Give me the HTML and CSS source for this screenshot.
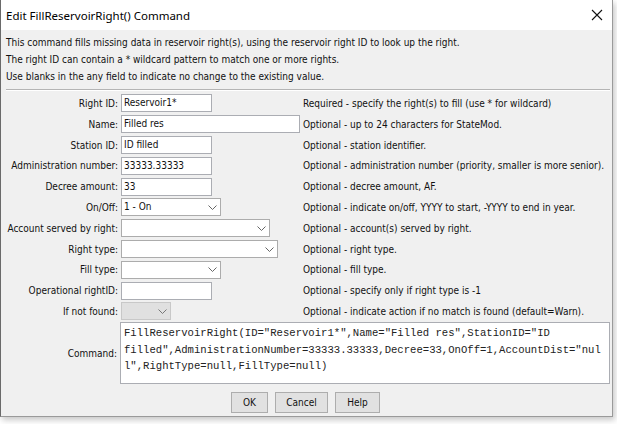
FILE: index.html
```html
<!DOCTYPE html>
<html>
<head>
<meta charset="utf-8">
<link rel="stylesheet" href="styles.css">
</head>
<body>
<div class="window">
  <div class="titlebar">
    <span class="title">Edit FillReservoirRight() Command</span>
    <span class="close"><svg width="12" height="12" viewBox="0 0 12 12"><path d="M1 1L11 11M11 1L1 11" stroke="#111" stroke-width="1.1" fill="none"/></svg></span>
  </div>
  <div class="content">
    <div class="intro">
      <p>This command fills missing data in reservoir right(s), using the reservoir right ID to look up the right.</p>
      <p>The right ID can contain a * wildcard pattern to match one or more rights.</p>
      <p>Use blanks in the any field to indicate no change to the existing value.</p>
    </div>
    <div class="sep"></div>
    <div class="form">
      <div class="label">Right ID:</div>
      <div class="cell"><div class="input w91">Reservoir1*</div></div>
      <div class="desc">Required - specify the right(s) to fill (use * for wildcard)</div>

      <div class="label">Name:</div>
      <div class="cell"><div class="input w179">Filled res</div></div>
      <div class="desc">Optional - up to 24 characters for StateMod.</div>

      <div class="label">Station ID:</div>
      <div class="cell"><div class="input w91">ID filled</div></div>
      <div class="desc">Optional - station identifier.</div>

      <div class="label">Administration number:</div>
      <div class="cell"><div class="input w91">33333.33333</div></div>
      <div class="desc">Optional - administration number (priority, smaller is more senior).</div>

      <div class="label">Decree amount:</div>
      <div class="cell"><div class="input w91">33</div></div>
      <div class="desc">Optional - decree amount, AF.</div>

      <div class="label">On/Off:</div>
      <div class="cell"><div class="combo w100"><span class="combo-text">1 - On</span><svg class="chev" width="9" height="5" viewBox="0 0 9 5"><path d="M0.5 0.5L4.5 4.5L8.5 0.5" stroke="#666" fill="none"/></svg></div></div>
      <div class="desc">Optional - indicate on/off, YYYY to start, -YYYY to end in year.</div>

      <div class="label">Account served by right:</div>
      <div class="cell"><div class="combo w149"><span class="combo-text"></span><svg class="chev" width="9" height="5" viewBox="0 0 9 5"><path d="M0.5 0.5L4.5 4.5L8.5 0.5" stroke="#666" fill="none"/></svg></div></div>
      <div class="desc">Optional - account(s) served by right.</div>

      <div class="label">Right type:</div>
      <div class="cell"><div class="combo w157"><span class="combo-text"></span><svg class="chev" width="9" height="5" viewBox="0 0 9 5"><path d="M0.5 0.5L4.5 4.5L8.5 0.5" stroke="#666" fill="none"/></svg></div></div>
      <div class="desc">Optional - right type.</div>

      <div class="label">Fill type:</div>
      <div class="cell"><div class="combo w100"><span class="combo-text"></span><svg class="chev" width="9" height="5" viewBox="0 0 9 5"><path d="M0.5 0.5L4.5 4.5L8.5 0.5" stroke="#666" fill="none"/></svg></div></div>
      <div class="desc">Optional - fill type.</div>

      <div class="label">Operational rightID:</div>
      <div class="cell"><div class="input w91"></div></div>
      <div class="desc">Optional - specify only if right type is -1</div>

      <div class="label">If not found:</div>
      <div class="cell"><div class="combo disabled w50"><span class="combo-text"></span><svg class="chev" width="9" height="5" viewBox="0 0 9 5"><path d="M0.5 0.5L4.5 4.5L8.5 0.5" stroke="#777" fill="none"/></svg></div></div>
      <div class="desc">Optional - indicate action if no match is found (default=Warn).</div>
    </div>
    <div class="cmd-row">
      <div class="label cmd-label">Command:</div>
      <div class="textarea"><div class="code">FillReservoirRight(ID="Reservoir1*",Name="Filled res",StationID="ID</div><div class="code">filled",AdministrationNumber=33333.33333,Decree=33,OnOff=1,AccountDist="nul</div><div class="code">l",RightType=null,FillType=null)</div></div>
    </div>
    <div class="buttons">
      <div class="btn w37">OK</div>
      <div class="btn w53">Cancel</div>
      <div class="btn w45">Help</div>
    </div>
  </div>
</div>
</body>
</html>
```
FILE: styles.css
```css
html, body {
  margin: 0;
  padding: 0;
  background: #ffffff;
}
body {
  width: 617px;
  height: 424px;
  overflow: hidden;
  font-family: "DejaVu Sans Condensed", "DejaVu Sans", sans-serif;
  font-size: 10px;
  color: #111;
}
.window {
  width: 611px;
  height: 416px;
  border-left: 1px solid #6a6a6a;
  border-right: 1px solid #9a9a9a;
  border-bottom: 1px solid #9a9a9a;
  background: #f0f0f0;
  box-shadow: 2px 3px 6px rgba(0,0,0,0.22);
  display: flex;
  flex-direction: column;
}
.titlebar {
  height: 30px;
  background: #ffffff;
  display: flex;
  align-items: center;
  justify-content: space-between;
  padding-left: 5px;
  padding-right: 9px;
}
.title {
  font-family: "Noto Sans", sans-serif;
  font-size: 11.5px;
  color: #000;
  padding-top: 1px;
}
.close {
  display: flex;
  width: 12px;
  height: 12px;
}
.content {
  display: flex;
  flex-direction: column;
  padding-right: 2px;
}
.intro {
  padding: 3.5px 0 0 5px;
}
.intro p {
  margin: 0;
  height: 17px;
  line-height: 17px;
  white-space: nowrap;
}
.sep {
  margin: 4px 0 0 5px;
  height: 0;
  border-top: 1px solid #b4b4b4;
  border-bottom: 1px solid #ffffff;
}
.form {
  margin-top: 2.6px;
  display: grid;
  grid-template-columns: 120px 182px 1fr;
  grid-auto-rows: 20.8px;
  align-items: center;
}
.label {
  text-align: right;
  padding-right: 3px;
  white-space: nowrap;
}
.cell {
  display: flex;
  align-items: center;
}
.desc {
  white-space: nowrap;
}
.input, .combo {
  height: 18px;
  box-sizing: border-box;
  border: 1px solid #abadb3;
  background: #ffffff;
  padding-left: 2px;
  line-height: 16px;
  white-space: nowrap;
  overflow: hidden;
}
.combo {
  display: flex;
  align-items: center;
  justify-content: space-between;
  border-color: #acacac;
  padding-right: 3px;
}
.combo.disabled {
  background: #e0e0e0;
  border-color: #c8c8c8;
}
.chev {
  flex: none;
}
.w91 { width: 91px; }
.w179 { width: 179px; }
.w100 { width: 100px; }
.w149 { width: 149px; }
.w157 { width: 157px; }
.w50 { width: 50px; }
.cmd-row {
  margin-top: 0.6px;
  display: grid;
  grid-template-columns: 119px 1fr;
  align-items: center;
}
.textarea {
  height: 62px;
  box-sizing: border-box;
  border: 1px solid #abadb3;
  background: #ffffff;
  padding: 2px 0 0 3px;
}
.code {
  font-family: "Liberation Mono", monospace;
  font-size: 10.6px;
  line-height: 16.5px;
  white-space: pre;
  color: #222;
}
.buttons {
  margin-top: 8px;
  display: flex;
  justify-content: center;
  gap: 7px;
}
.btn {
  height: 21px;
  box-sizing: border-box;
  border: 1px solid #adadad;
  background: #e1e1e1;
  display: flex;
  align-items: center;
  justify-content: center;
}
.w37 { width: 37px; }
.w53 { width: 53px; }
.w45 { width: 45px; }
```
